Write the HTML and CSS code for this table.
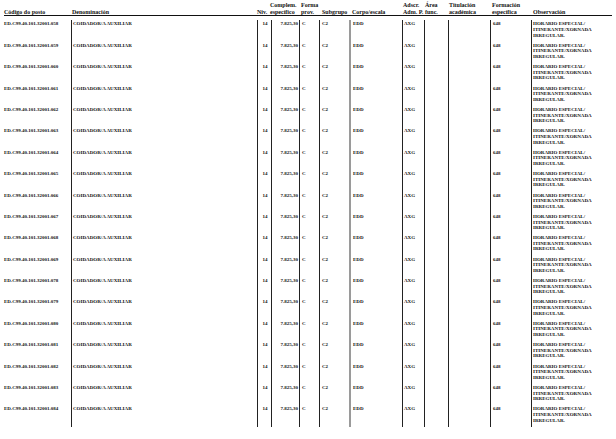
FILE: index.html
```html
<!DOCTYPE html>
<html lang="gl">
<head>
<meta charset="utf-8">
<title>Relación de postos</title>
<link rel="stylesheet" href="styles.css">
</head>
<body>
<div class="sheet">
  <div class="head">
    <div class="h">Código do posto</div>
    <div class="h">Denominación</div>
    <div class="h">Niv.</div>
    <div class="h">Complem.<br>específico</div>
    <div class="h">Forma<br>prov.</div>
    <div class="h">Subgrupo</div>
    <div class="h">Corpo/escala</div>
    <div class="h">Adscr.<br>Adm. P.</div>
    <div class="h">Área<br>func.</div>
    <div class="h">Titulación<br>académica</div>
    <div class="h">Formación<br>específica</div>
    <div class="h">Observación</div>
  </div>
  <div class="body">
    <div class="row"><div class="c code">ED.C99.40.101.32001.058</div><div class="c den">COIDADOR/A AUXILIAR</div><div class="c niv">14</div><div class="c comp">7.825,30</div><div class="c forma">C</div><div class="c sub">C2</div><div class="c corpo">EDD</div><div class="c ads">AXG</div><div class="c area"></div><div class="c tit"></div><div class="c form">648</div><div class="c obs">HORARIO ESPECIAL/<br>ITINERANTE/XORNADA<br>IRREGULAR.</div></div>
    <div class="row"><div class="c code">ED.C99.40.101.32001.059</div><div class="c den">COIDADOR/A AUXILIAR</div><div class="c niv">14</div><div class="c comp">7.825,30</div><div class="c forma">C</div><div class="c sub">C2</div><div class="c corpo">EDD</div><div class="c ads">AXG</div><div class="c area"></div><div class="c tit"></div><div class="c form">648</div><div class="c obs">HORARIO ESPECIAL/<br>ITINERANTE/XORNADA<br>IRREGULAR.</div></div>
    <div class="row"><div class="c code">ED.C99.40.101.32001.060</div><div class="c den">COIDADOR/A AUXILIAR</div><div class="c niv">14</div><div class="c comp">7.825,30</div><div class="c forma">C</div><div class="c sub">C2</div><div class="c corpo">EDD</div><div class="c ads">AXG</div><div class="c area"></div><div class="c tit"></div><div class="c form">648</div><div class="c obs">HORARIO ESPECIAL/<br>ITINERANTE/XORNADA<br>IRREGULAR.</div></div>
    <div class="row"><div class="c code">ED.C99.40.101.32001.061</div><div class="c den">COIDADOR/A AUXILIAR</div><div class="c niv">14</div><div class="c comp">7.825,30</div><div class="c forma">C</div><div class="c sub">C2</div><div class="c corpo">EDD</div><div class="c ads">AXG</div><div class="c area"></div><div class="c tit"></div><div class="c form">648</div><div class="c obs">HORARIO ESPECIAL/<br>ITINERANTE/XORNADA<br>IRREGULAR.</div></div>
    <div class="row"><div class="c code">ED.C99.40.101.32001.062</div><div class="c den">COIDADOR/A AUXILIAR</div><div class="c niv">14</div><div class="c comp">7.825,30</div><div class="c forma">C</div><div class="c sub">C2</div><div class="c corpo">EDD</div><div class="c ads">AXG</div><div class="c area"></div><div class="c tit"></div><div class="c form">648</div><div class="c obs">HORARIO ESPECIAL/<br>ITINERANTE/XORNADA<br>IRREGULAR.</div></div>
    <div class="row"><div class="c code">ED.C99.40.101.32001.063</div><div class="c den">COIDADOR/A AUXILIAR</div><div class="c niv">14</div><div class="c comp">7.825,30</div><div class="c forma">C</div><div class="c sub">C2</div><div class="c corpo">EDD</div><div class="c ads">AXG</div><div class="c area"></div><div class="c tit"></div><div class="c form">648</div><div class="c obs">HORARIO ESPECIAL/<br>ITINERANTE/XORNADA<br>IRREGULAR.</div></div>
    <div class="row"><div class="c code">ED.C99.40.101.32001.064</div><div class="c den">COIDADOR/A AUXILIAR</div><div class="c niv">14</div><div class="c comp">7.825,30</div><div class="c forma">C</div><div class="c sub">C2</div><div class="c corpo">EDD</div><div class="c ads">AXG</div><div class="c area"></div><div class="c tit"></div><div class="c form">648</div><div class="c obs">HORARIO ESPECIAL/<br>ITINERANTE/XORNADA<br>IRREGULAR.</div></div>
    <div class="row"><div class="c code">ED.C99.40.101.32001.065</div><div class="c den">COIDADOR/A AUXILIAR</div><div class="c niv">14</div><div class="c comp">7.825,30</div><div class="c forma">C</div><div class="c sub">C2</div><div class="c corpo">EDD</div><div class="c ads">AXG</div><div class="c area"></div><div class="c tit"></div><div class="c form">648</div><div class="c obs">HORARIO ESPECIAL/<br>ITINERANTE/XORNADA<br>IRREGULAR.</div></div>
    <div class="row"><div class="c code">ED.C99.40.101.32001.066</div><div class="c den">COIDADOR/A AUXILIAR</div><div class="c niv">14</div><div class="c comp">7.825,30</div><div class="c forma">C</div><div class="c sub">C2</div><div class="c corpo">EDD</div><div class="c ads">AXG</div><div class="c area"></div><div class="c tit"></div><div class="c form">648</div><div class="c obs">HORARIO ESPECIAL/<br>ITINERANTE/XORNADA<br>IRREGULAR.</div></div>
    <div class="row"><div class="c code">ED.C99.40.101.32001.067</div><div class="c den">COIDADOR/A AUXILIAR</div><div class="c niv">14</div><div class="c comp">7.825,30</div><div class="c forma">C</div><div class="c sub">C2</div><div class="c corpo">EDD</div><div class="c ads">AXG</div><div class="c area"></div><div class="c tit"></div><div class="c form">648</div><div class="c obs">HORARIO ESPECIAL/<br>ITINERANTE/XORNADA<br>IRREGULAR.</div></div>
    <div class="row"><div class="c code">ED.C99.40.101.32001.068</div><div class="c den">COIDADOR/A AUXILIAR</div><div class="c niv">14</div><div class="c comp">7.825,30</div><div class="c forma">C</div><div class="c sub">C2</div><div class="c corpo">EDD</div><div class="c ads">AXG</div><div class="c area"></div><div class="c tit"></div><div class="c form">648</div><div class="c obs">HORARIO ESPECIAL/<br>ITINERANTE/XORNADA<br>IRREGULAR.</div></div>
    <div class="row"><div class="c code">ED.C99.40.101.32001.069</div><div class="c den">COIDADOR/A AUXILIAR</div><div class="c niv">14</div><div class="c comp">7.825,30</div><div class="c forma">C</div><div class="c sub">C2</div><div class="c corpo">EDD</div><div class="c ads">AXG</div><div class="c area"></div><div class="c tit"></div><div class="c form">648</div><div class="c obs">HORARIO ESPECIAL/<br>ITINERANTE/XORNADA<br>IRREGULAR.</div></div>
    <div class="row"><div class="c code">ED.C99.40.101.32001.078</div><div class="c den">COIDADOR/A AUXILIAR</div><div class="c niv">14</div><div class="c comp">7.825,30</div><div class="c forma">C</div><div class="c sub">C2</div><div class="c corpo">EDD</div><div class="c ads">AXG</div><div class="c area"></div><div class="c tit"></div><div class="c form">648</div><div class="c obs">HORARIO ESPECIAL/<br>ITINERANTE/XORNADA<br>IRREGULAR.</div></div>
    <div class="row"><div class="c code">ED.C99.40.101.32001.079</div><div class="c den">COIDADOR/A AUXILIAR</div><div class="c niv">14</div><div class="c comp">7.825,30</div><div class="c forma">C</div><div class="c sub">C2</div><div class="c corpo">EDD</div><div class="c ads">AXG</div><div class="c area"></div><div class="c tit"></div><div class="c form">648</div><div class="c obs">HORARIO ESPECIAL/<br>ITINERANTE/XORNADA<br>IRREGULAR.</div></div>
    <div class="row"><div class="c code">ED.C99.40.101.32001.080</div><div class="c den">COIDADOR/A AUXILIAR</div><div class="c niv">14</div><div class="c comp">7.825,30</div><div class="c forma">C</div><div class="c sub">C2</div><div class="c corpo">EDD</div><div class="c ads">AXG</div><div class="c area"></div><div class="c tit"></div><div class="c form">648</div><div class="c obs">HORARIO ESPECIAL/<br>ITINERANTE/XORNADA<br>IRREGULAR.</div></div>
    <div class="row"><div class="c code">ED.C99.40.101.32001.081</div><div class="c den">COIDADOR/A AUXILIAR</div><div class="c niv">14</div><div class="c comp">7.825,30</div><div class="c forma">C</div><div class="c sub">C2</div><div class="c corpo">EDD</div><div class="c ads">AXG</div><div class="c area"></div><div class="c tit"></div><div class="c form">648</div><div class="c obs">HORARIO ESPECIAL/<br>ITINERANTE/XORNADA<br>IRREGULAR.</div></div>
    <div class="row"><div class="c code">ED.C99.40.101.32001.082</div><div class="c den">COIDADOR/A AUXILIAR</div><div class="c niv">14</div><div class="c comp">7.825,30</div><div class="c forma">C</div><div class="c sub">C2</div><div class="c corpo">EDD</div><div class="c ads">AXG</div><div class="c area"></div><div class="c tit"></div><div class="c form">648</div><div class="c obs">HORARIO ESPECIAL/<br>ITINERANTE/XORNADA<br>IRREGULAR.</div></div>
    <div class="row"><div class="c code">ED.C99.40.101.32001.083</div><div class="c den">COIDADOR/A AUXILIAR</div><div class="c niv">14</div><div class="c comp">7.825,30</div><div class="c forma">C</div><div class="c sub">C2</div><div class="c corpo">EDD</div><div class="c ads">AXG</div><div class="c area"></div><div class="c tit"></div><div class="c form">648</div><div class="c obs">HORARIO ESPECIAL/<br>ITINERANTE/XORNADA<br>IRREGULAR.</div></div>
    <div class="row"><div class="c code">ED.C99.40.101.32001.084</div><div class="c den">COIDADOR/A AUXILIAR</div><div class="c niv">14</div><div class="c comp">7.825,30</div><div class="c forma">C</div><div class="c sub">C2</div><div class="c corpo">EDD</div><div class="c ads">AXG</div><div class="c area"></div><div class="c tit"></div><div class="c form">648</div><div class="c obs">HORARIO ESPECIAL/<br>ITINERANTE/XORNADA<br>IRREGULAR.</div></div>
  </div>
</div>
</body>
</html>
```
FILE: styles.css
```css
html, body {
  margin: 0;
  padding: 0;
  background: #ffffff;
}

body {
  font-family: "Liberation Serif", "Times New Roman", serif;
  font-weight: bold;
  color: #111111;
}

.sheet {
  width: 608px;
  padding: 0 4px;
}

.head {
  display: grid;
  grid-template-columns: 68px 185px 13px 31px 21px 30px 51px 22px 24px 43px 41px 79px;
  align-items: end;
  font-size: 6px;
  line-height: 6.7px;
  padding-top: 2px;
  height: 13.4px;
  border-bottom: 1px solid #111111;
  margin-bottom: 4px;
}

.h {
  white-space: nowrap;
}

.row {
  display: grid;
  grid-template-columns: 67px 186px 14px 28px 20px 30px 53px 22px 24px 42px 41px 81px;
  height: 21.4px;
  font-size: 5px;
  line-height: 5.6px;
}

.c {
  border-left: 1px solid #222222;
  padding: 1px 0 0 1px;
  white-space: nowrap;
}

.code {
  border-left: none;
  padding-left: 0;
}

.niv {
  text-align: center;
}

.comp {
  text-align: right;
  padding-right: 1px;
}

.forma,
.sub,
.corpo,
.form {
  padding-left: 2px;
}

.corpo {
  border-left: 2px solid #9a9a9a;
}
```
